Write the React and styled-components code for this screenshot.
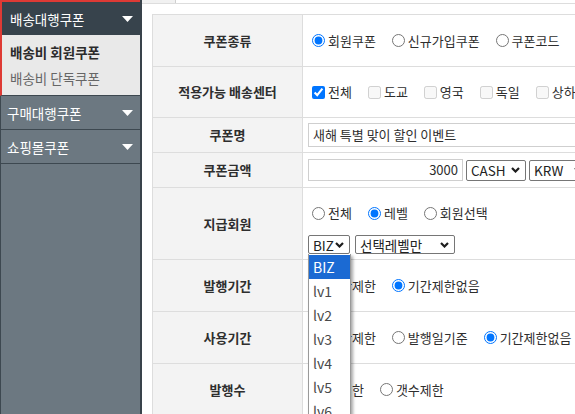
import React from 'react';
import styled, { createGlobalStyle } from 'styled-components';

const Global = createGlobalStyle`
  html, body { margin: 0; padding: 0; background: #fff; }
  body {
    font-family: "Noto Sans CJK KR", "Noto Sans", sans-serif;
    font-size: 13px;
    color: #333;
    overflow: hidden;
  }
  * { box-sizing: border-box; }
`;

const Page = styled.div`
  display: flex;
  width: 575px;
  height: 414px;
  overflow: hidden;
`;

/* ---------- Sidebar ---------- */
const Sidebar = styled.nav`
  width: 142px;
  flex: none;
  height: 100%;
  background: #6c7881;
  box-shadow: inset 1px 0 0 #3d4850;
  border-right: 2px solid #39434b;
  display: flex;
  flex-direction: column;
`;

const ActiveGroup = styled.div`
  border-top: 2px solid #de3a35;
  border-left: 2px solid #de3a35;
  border-bottom: 1px solid #3d4850;
`;

const GroupHeader = styled.div`
  height: ${p => p.$h}px;
  display: flex;
  align-items: center;
  justify-content: space-between;
  padding: 0 7px 0 ${p => p.$pl}px;
  background: ${p => (p.$active ? '#37434c' : '#6c7881')};
  color: #fff;
  font-size: 13.5px;
  line-height: 18px;
  border-left: ${p => (p.$active ? 'none' : '1px solid #3d4850')};
  border-bottom: ${p => (p.$active ? 'none' : '1px solid #3d4850')};
`;

const SubMenu = styled.ul`
  list-style: none;
  margin: 0;
  padding: 4px 8px 4px 8px;
  background: #e9e9e9;
`;

const SubItem = styled.li`
  height: 26px;
  display: flex;
  align-items: center;
  font-size: 13.5px;
  font-weight: ${p => (p.$active ? 700 : 400)};
  color: ${p => (p.$active ? '#2b2b2b' : '#666')};
`;

const Caret = () => (
  <svg width="11" height="6" viewBox="0 0 11 6">
    <polygon points="0,0 11,0 5.5,6" fill="#fff" />
  </svg>
);

/* ---------- Main ---------- */
const Main = styled.main`
  flex: 1;
  min-width: 0;
  overflow: hidden;
  background: #fff;
  position: relative;
`;

const TabStrip = styled.div`
  height: 4px;
  border-bottom: 1px solid #ddd;
  display: flex;
`;

const Tab = styled.div`
  width: 34px;
  background: #f1f1f1;
  border-right: 1px solid #cfcfcf;
`;

const Form = styled.div`
  margin: 10px 0 0 10px;
  width: 620px;
  border-top: 1px solid #ddd;
  border-left: 1px solid #ddd;
`;

const Row = styled.div`
  display: grid;
  grid-template-columns: 150px 1fr;
  height: ${p => p.$h}px;
  border-bottom: 1px solid #ddd;
`;

const Label = styled.div`
  background: #f3f3f3;
  border-right: 1px solid #ddd;
  display: flex;
  align-items: center;
  justify-content: center;
  font-weight: 700;
  color: #2e2e2e;
  line-height: 18px;
`;

const Cell = styled.div`
  display: flex;
  flex-direction: ${p => (p.$stack ? 'column' : 'row')};
  align-items: ${p => (p.$stack ? 'flex-start' : 'center')};
  padding: ${p => (p.$stack ? '16px 5px 0' : '0 5px')};
  gap: ${p => (p.$stack ? '13px' : '0')};
  white-space: nowrap;
`;

const Options = styled.div`
  display: flex;
  align-items: center;
  height: 18px;
`;

const Option = styled.label`
  display: inline-flex;
  align-items: center;
  margin-right: 12px;
  line-height: 18px;
  color: #2e2e2e;
  input {
    margin: 0 3px 0 4px;
    width: 13px;
    height: 13px;
  }
`;

const TextInput = styled.div`
  height: ${p => p.$h}px;
  width: ${p => p.$w}px;
  border: 1px solid #cfcfcf;
  padding: 0 4px;
  display: flex;
  align-items: center;
  justify-content: ${p => (p.$right ? 'flex-end' : 'flex-start')};
  color: #2e2e2e;
  line-height: 18px;
  flex: none;
`;

const Inline = styled.div`
  display: flex;
  align-items: center;
`;

const SelectWrap = styled.div`
  position: relative;
  margin-left: ${p => p.$ml || 0}px;
  flex: none;
`;

const SelectBox = styled.div`
  height: ${p => p.$h}px;
  width: ${p => p.$w}px;
  border: 1px solid #767676;
  border-radius: 2px;
  background: #fff;
  padding: 0 5px 0 4px;
  display: flex;
  align-items: center;
  justify-content: space-between;
  color: #222;
  font-size: 13.5px;
  line-height: 16px;
`;

const Chevron = () => (
  <svg width="9" height="6" viewBox="0 0 9 6">
    <path d="M1 1 L4.5 4.5 L8 1" fill="none" stroke="#1d1d1d" strokeWidth="2.2" />
  </svg>
);

const Dropdown = styled.ul`
  position: absolute;
  top: 100%;
  left: 0;
  width: 43px;
  margin: 0;
  padding: 1px 0 0;
  list-style: none;
  background: #fff;
  border: 1px solid #9a9a9a;
  border-top: none;
  box-shadow: 2px 2px 3px rgba(0, 0, 0, 0.35);
  z-index: 10;
`;

const DropItem = styled.li`
  height: 24px;
  display: flex;
  align-items: center;
  padding-left: 4px;
  background: ${p => (p.$sel ? '#1b6ad3' : 'transparent')};
  color: ${p => (p.$sel ? '#fff' : '#4a4a4a')};
  font-size: 14px;
`;

const Radio = ({ label, checked, name }) => (
  <Option>
    <input type="radio" name={name} defaultChecked={checked} />
    {label}
  </Option>
);

const Check = ({ label, checked, disabled }) => (
  <Option>
    <input type="checkbox" defaultChecked={checked} disabled={disabled} />
    {label}
  </Option>
);

const levels = ['BIZ', 'lv1', 'lv2', 'lv3', 'lv4', 'lv5', 'lv6', 'lv7'];

export default function App() {
  return (
    <>
      <Global />
      <Page>
        <Sidebar>
          <ActiveGroup>
            <GroupHeader $active $h={33} $pl={8}>
              <span>배송대행쿠폰</span>
              <Caret />
            </GroupHeader>
            <SubMenu>
              <SubItem $active>배송비 회원쿠폰</SubItem>
              <SubItem>배송비 단독쿠폰</SubItem>
            </SubMenu>
          </ActiveGroup>
          <GroupHeader $h={34} $pl={6}>
            <span>구매대행쿠폰</span>
            <Caret />
          </GroupHeader>
          <GroupHeader $h={34} $pl={6}>
            <span>쇼핑몰쿠폰</span>
            <Caret />
          </GroupHeader>
        </Sidebar>

        <Main>
          <TabStrip>
            <Tab />
          </TabStrip>
          <Form>
            <Row $h={52}>
              <Label>쿠폰종류</Label>
              <Cell>
                <Radio name="type" label="회원쿠폰" checked />
                <Radio name="type" label="신규가입쿠폰" />
                <Radio name="type" label="쿠폰코드" />
              </Cell>
            </Row>
            <Row $h={51}>
              <Label>적용가능 배송센터</Label>
              <Cell>
                <Check label="전체" checked />
                <Check label="도교" disabled />
                <Check label="영국" disabled />
                <Check label="독일" disabled />
                <Check label="상하이" disabled />
              </Cell>
            </Row>
            <Row $h={35}>
              <Label>쿠폰명</Label>
              <Cell>
                <TextInput $h={24} $w={420}>새해 특별 맞이 할인 이벤트</TextInput>
              </Cell>
            </Row>
            <Row $h={35}>
              <Label>쿠폰금액</Label>
              <Cell>
                <TextInput $h={22} $w={155} $right>3000</TextInput>
                <SelectWrap $ml={3}>
                  <SelectBox $h={21} $w={60}>
                    <span>CASH</span>
                    <Chevron />
                  </SelectBox>
                </SelectWrap>
                <SelectWrap $ml={3}>
                  <SelectBox $h={21} $w={60}>
                    <span>KRW</span>
                    <Chevron />
                  </SelectBox>
                </SelectWrap>
              </Cell>
            </Row>
            <Row $h={72}>
              <Label>지급회원</Label>
              <Cell $stack>
                <Options>
                  <Radio name="member" label="전체" />
                  <Radio name="member" label="레벨" checked />
                  <Radio name="member" label="회원선택" />
                </Options>
                <Inline>
                  <SelectWrap>
                    <SelectBox $h={19} $w={42}>
                      <span>BIZ</span>
                      <Chevron />
                    </SelectBox>
                    <Dropdown>
                      {levels.map((l, i) => (
                        <DropItem key={l} $sel={i === 0}>{l}</DropItem>
                      ))}
                    </Dropdown>
                  </SelectWrap>
                  <SelectWrap $ml={5}>
                    <SelectBox $h={19} $w={100}>
                      <span>선택레벨만</span>
                      <Chevron />
                    </SelectBox>
                  </SelectWrap>
                </Inline>
              </Cell>
            </Row>
            <Row $h={52}>
              <Label>발행기간</Label>
              <Cell>
                <Radio name="issue" label="기간제한" />
                <Radio name="issue" label="기간제한없음" checked />
              </Cell>
            </Row>
            <Row $h={52}>
              <Label>사용기간</Label>
              <Cell>
                <Radio name="use" label="기간제한" />
                <Radio name="use" label="발행일기준" />
                <Radio name="use" label="기간제한없음" checked />
              </Cell>
            </Row>
            <Row $h={52}>
              <Label>발행수</Label>
              <Cell>
                <Radio name="count" label="무제한" />
                <Radio name="count" label="갯수제한" />
              </Cell>
            </Row>
          </Form>
        </Main>
      </Page>
    </>
  );
}
